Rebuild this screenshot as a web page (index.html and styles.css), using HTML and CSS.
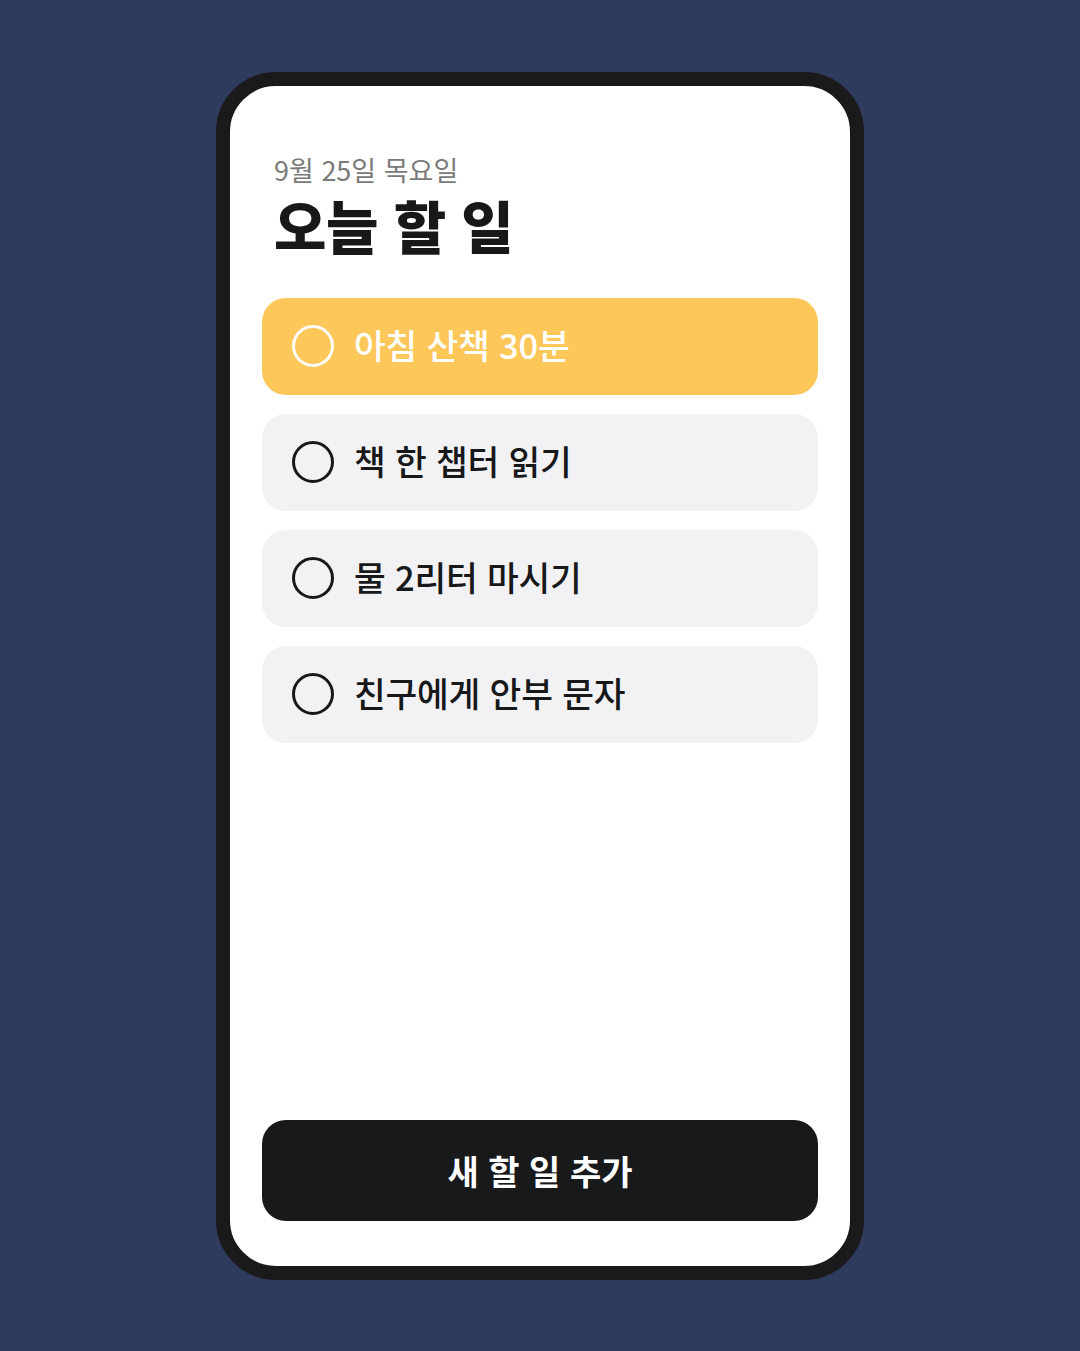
FILE: index.html
```html
<!DOCTYPE html>
<html lang="ko">
<head>
    <meta charset="UTF-8">
    <meta name="viewport" content="width=device-width, initial-scale=1.0">
    <title>오늘 할 일</title>
    <link rel="stylesheet" href="styles.css">
</head>
<body>

    <!-- Phone Frame -->
    <div class="phone">
        <div class="screen">

            <!-- Header -->
            <div class="header">
                <div class="date">9월 25일 목요일</div>
                <h1>오늘 할 일</h1>
            </div>

            <!-- Task List -->
            <div class="task-list">
                <div class="task active">
                    <span class="check"></span>
                    <span class="label">아침 산책 30분</span>
                </div>
                <div class="task">
                    <span class="check"></span>
                    <span class="label">책 한 챕터 읽기</span>
                </div>
                <div class="task">
                    <span class="check"></span>
                    <span class="label">물 2리터 마시기</span>
                </div>
                <div class="task">
                    <span class="check"></span>
                    <span class="label">친구에게 안부 문자</span>
                </div>
            </div>

            <!-- Add Button -->
            <button class="add-btn">새 할 일 추가</button>
        </div>
    </div>

</body>
</html>
```

FILE: styles.css
```css
body {
    font-family: "Noto Sans CJK KR", "Noto Sans", sans-serif;
    background-color: #2f3b5c;
    margin: 0;
    padding: 0;
    height: 1351px;
    display: flex;
    justify-content: center;
    align-items: center;
}

/* Phone Frame */
.phone {
    width: 620px;
    height: 1180px;
    border: 14px solid #1a1a1b;
    border-radius: 60px;
    background-color: #fff;
    overflow: hidden;
}

.screen {
    height: 100%;
    box-sizing: border-box;
    padding: 66px 32px 45px;
    display: flex;
    flex-direction: column;
}

/* Header */
.header {
    padding-left: 12px;
    margin-bottom: 38px;
}

.date {
    font-size: 27px;
    color: #7a7a7a;
    line-height: 36px;
}

h1 {
    font-size: 57px;
    font-weight: 900;
    color: #17181a;
    line-height: 72px;
    margin: 0;
    letter-spacing: -0.4px;
}

/* Task List */
.task-list {
    display: flex;
    flex-direction: column;
    gap: 19px;
}

.task {
    height: 97px;
    background-color: #f2f2f4;
    border-radius: 24px;
    display: flex;
    align-items: center;
    padding-left: 30px;
    gap: 20px;
}

.check {
    width: 36px;
    height: 36px;
    border: 3.5px solid #17181a;
    border-radius: 50%;
    flex-shrink: 0;
}

.label {
    font-size: 34.5px;
    font-weight: 500;
    color: #17181a;
    letter-spacing: -0.2px;
    padding-bottom: 4px;
}

.task.active {
    background-color: #fdc75a;
}

.task.active .check {
    border-color: #fff;
}

.task.active .label {
    color: #fff;
}

/* Add Button */
.add-btn {
    margin-top: auto;
    height: 101px;
    border: none;
    border-radius: 24px;
    background-color: #17191b;
    color: #fff;
    font-family: inherit;
    font-size: 34px;
    font-weight: 700;
}
```
